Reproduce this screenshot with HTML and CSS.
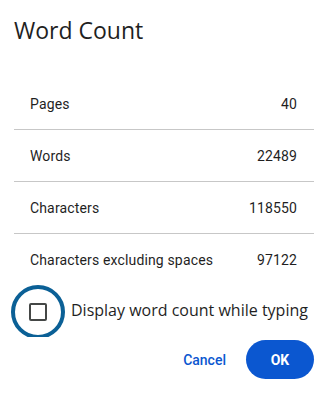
FILE: index.html
```html
<!DOCTYPE html>
<html lang="en">
<head>
<meta charset="utf-8">
<title>Word Count</title>
<link rel="stylesheet" href="styles.css">
</head>
<body>
<div class="dialog">
  <h1 class="title">Word Count</h1>
  <div class="stats">
    <div class="row"><span>Pages</span><span>40</span></div>
    <div class="row"><span>Words</span><span>22489</span></div>
    <div class="row"><span>Characters</span><span>118550</span></div>
    <div class="row"><span>Characters excluding spaces</span><span>97122</span></div>
  </div>
  <label class="check-row">
    <span class="check-wrap">
      <span class="ring"></span>
      <span class="box"></span>
    </span>
    <span class="check-label">Display word count while typing</span>
  </label>
  <div class="actions">
    <button class="btn btn-text">Cancel</button>
    <button class="btn btn-filled">OK</button>
  </div>
</div>
</body>
</html>
```
FILE: styles.css
```css
html, body {
  margin: 0;
  padding: 0;
  background: #ffffff;
}
body {
  font-family: Roboto, "Noto Sans", Arial, sans-serif;
  color: #1f1f1f;
  width: 328px;
  height: 394px;
  overflow: hidden;
}
.dialog {
  padding: 16px 14px 0 14px;
}
.title {
  margin: 0;
  font-family: "Open Sans", Roboto, sans-serif;
  font-size: 23px;
  line-height: 28px;
  font-weight: 400;
  color: #1f1f1f;
}
.stats {
  margin-top: 34px;
}
.row {
  display: flex;
  justify-content: space-between;
  align-items: center;
  height: 51px;
  padding: 0 17px 0 16px;
  font-size: 14px;
  line-height: 20px;
  letter-spacing: 0.15px;
  color: #1f1f1f;
  border-bottom: 1px solid #c7c7c7;
}
.row:last-child {
  border-bottom: none;
}
.check-row {
  display: flex;
  align-items: center;
  height: 48px;
  margin-top: 3px;
}
.check-wrap {
  position: relative;
  width: 48px;
  height: 48px;
  display: flex;
  align-items: center;
  justify-content: center;
  flex: none;
}
.ring {
  position: absolute;
  left: -3px;
  top: -3px;
  width: 54px;
  height: 54px;
  box-sizing: border-box;
  border: 4.5px solid #0b6096;
  border-radius: 50%;
  clip-path: inset(0 0 2px 0);
}
.box {
  width: 18px;
  height: 18px;
  box-sizing: border-box;
  border: 2px solid #444746;
  border-radius: 2px;
}
.check-label {
  margin-left: 9px;
  padding-bottom: 4px;
  font-family: "Open Sans", Roboto, sans-serif;
  font-size: 16px;
  line-height: 24px;
  color: #1f1f1f;
}
.actions {
  display: flex;
  justify-content: flex-end;
  align-items: center;
  gap: 8px;
  margin-top: 4px;
}
.btn {
  font-family: Roboto, "Noto Sans", Arial, sans-serif;
  font-size: 14px;
  font-weight: 500;
  height: 39px;
  border: none;
  border-radius: 20px;
  cursor: pointer;
}
.btn-text {
  background: transparent;
  color: #0b57d0;
  padding: 0 12px;
}
.btn-filled {
  background: #0b57d0;
  color: #ffffff;
  width: 68px;
  padding: 0;
  font-weight: 700;
}
```
